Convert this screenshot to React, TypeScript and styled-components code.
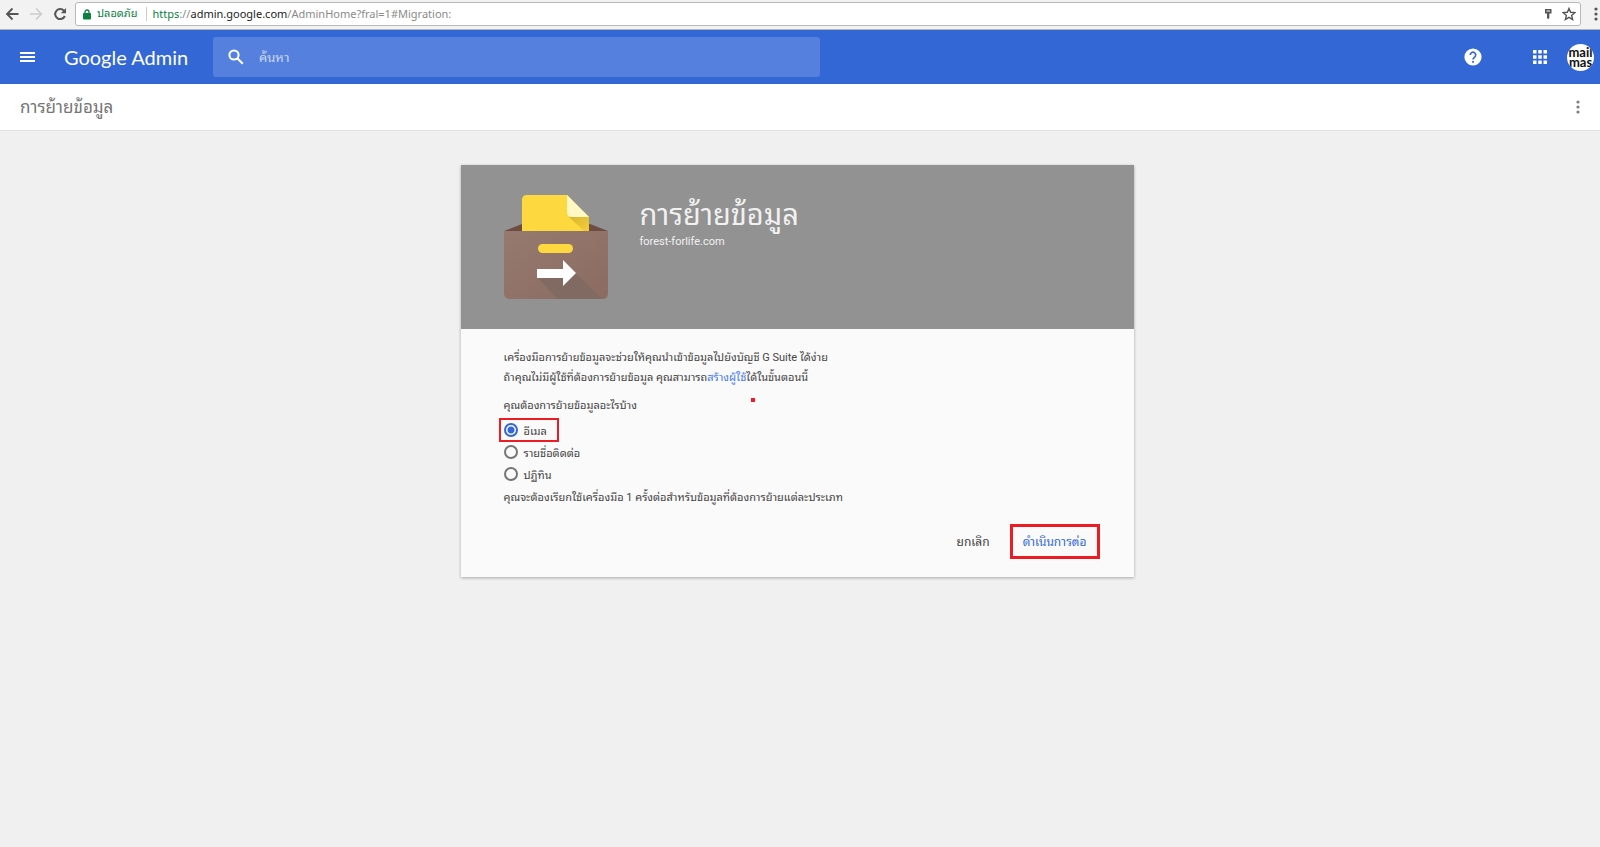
import React from "react";
import styled, { createGlobalStyle } from "styled-components";

const GlobalStyle = createGlobalStyle`
  * { box-sizing: border-box; }
  body {
    margin: 0;
    min-height: 100vh;
    background: #f0f0f0;
    color: #444;
    font-family: Roboto, "Noto Sans Thai Looped", "Noto Sans", sans-serif;
    font-size: 11px;
  }
  button, input { font: inherit; }
`;

const PlainButton = styled.button`
  display: grid;
  place-items: center;
  flex: none;
  padding: 0;
  border: 0;
  background: none;
  color: inherit;
  cursor: pointer;
`;

/* Browser bar */
const BrowserBar = styled.div`
  display: flex;
  align-items: center;
  height: 30px;
  padding: 0 0 1px 4px;
  border-bottom: 1px solid #b4b4b4;
  background: #f2f2f2;
  color: #555;
`;
const NavButton = styled(PlainButton)`
  width: 16px;
  height: 16px;
  margin-right: 8px;
  &:disabled { color: #ccc; cursor: default; }
`;
const AddressBox = styled.div`
  display: flex;
  align-items: center;
  flex: 1;
  height: 24px;
  margin-left: -1px;
  padding: 0 4px 0 7px;
  border: 1px solid #b8b8b8;
  border-radius: 3px;
  background: #fff;
  font-size: 12px;
`;
const Secure = styled.span`
  display: flex;
  align-items: center;
  gap: 6px;
  padding-right: 8px;
  margin-right: 6px;
  border-right: 1px solid #ccc;
  color: #0b8043;
  font-size: 11px;
  line-height: 14px;
`;
const Url = styled.span`
  flex: 1;
  color: #8a8a8a;
  font-family: "Noto Sans", sans-serif;
  font-size: 11px;
  line-height: 16px;
  white-space: nowrap;
  b { color: #222; font-weight: 400; }
  i { color: #0b8043; font-style: normal; }
`;
const BoxIcon = styled(PlainButton)`
  width: 14px;
  height: 14px;
  margin-left: 7px;
`;
const BrowserMenu = styled(PlainButton)`
  width: 14px;
  margin-left: 8px;
  margin-right: -3px;
`;

/* Application header */
const Header = styled.header`
  display: flex;
  align-items: center;
  height: 54px;
  padding: 0 6px 0 20px;
  background: #3367d6;
  color: #fff;
`;
const MenuButton = styled(PlainButton)`
  width: 15px;
  height: 24px;
`;
const Brand = styled.a`
  flex: none;
  width: 178px;
  padding-left: 29px;
  color: #fff;
  font-family: Lato, sans-serif;
  font-size: 20px;
  line-height: 24px;
  text-decoration: none;
  white-space: nowrap;
`;
const SearchBox = styled.label`
  display: flex;
  align-items: center;
  gap: 15px;
  flex: 0 1 607px;
  height: 40px;
  padding-left: 15px;
  border-radius: 3px;
  background: #5580dd;
`;
const SearchInput = styled.input`
  flex: 1;
  min-width: 0;
  border: 0;
  outline: 0;
  padding: 0;
  background: none;
  color: #fff;
  font-size: 13px;
  &::placeholder { color: #c9d7f5; opacity: 1; }
`;
const HeaderActions = styled.div`
  display: flex;
  align-items: center;
  margin-left: auto;
`;
const HelpButton = styled(PlainButton)`
  width: 18px;
  height: 18px;
  margin-right: 51px;
`;
const AppsButton = styled(PlainButton)`
  width: 14px;
  height: 14px;
  margin-right: 20px;
`;
const Avatar = styled(PlainButton)`
  display: block;
  width: 27px;
  height: 27px;
  border-radius: 50%;
  overflow: hidden;
  background: #fff;
  color: #111;
  font-family: Lato, sans-serif;
  font-size: 13px;
  font-weight: 700;
  line-height: 10px;
  text-align: center;
`;

const TitleBar = styled.div`
  display: flex;
  align-items: center;
  justify-content: space-between;
  height: 47px;
  padding: 0 20px;
  border-bottom: 1px solid #e0e0e0;
  background: #fff;
  color: #757575;
`;
const PageTitle = styled.h1`
  margin: 0;
  font-size: 17px;
  font-weight: 400;
  line-height: 24px;
`;
const MoreButton = styled(PlainButton)`
  width: 4px;
  height: 16px;
`;

/* Migration card */
const Main = styled.main`
  display: flex;
  justify-content: center;
  padding: 34px 6px 34px 0;
`;
const Card = styled.section`
  flex: 0 1 673px;
  background: #fafafa;
  box-shadow: 0 1px 3px rgba(0, 0, 0, 0.3);
`;
const CardHeader = styled.div`
  display: flex;
  gap: 32px;
  height: 164px;
  padding: 30px 43px;
  background: #929292;
  color: #f1f1f1;
`;
const CardTitle = styled.h2`
  margin: 0;
  font-size: 29px;
  font-weight: 400;
  line-height: 40px;
`;
const Domain = styled.p`
  margin: 0;
  font-size: 11px;
  line-height: 14px;
`;
const CardForm = styled.form`
  padding: 19px 34px 18px 43px;
`;
const Text = styled.p`
  margin: 0;
  line-height: 20px;
`;
const TextLink = styled.a`
  color: #4a7cf0;
  text-decoration: none;
`;
const Options = styled.fieldset`
  position: relative;
  display: flex;
  flex-direction: column;
  align-items: flex-start;
  margin: 8px 0 3px;
  padding: 0;
  border: 0;
`;
const Question = styled.legend`
  padding: 0 0 3px;
  line-height: 20px;
`;
const Option = styled.label<{ $marked?: boolean }>`
  display: flex;
  align-items: center;
  gap: 6px;
  height: 22px;
  margin-left: -4px;
  padding: 0 11px 0 4px;
  outline: ${(p) => (p.$marked ? "2px solid #ed1c24" : "none")};
  outline-offset: -1px;
`;
const Radio = styled.input`
  appearance: none;
  width: 14px;
  height: 14px;
  margin: 0;
  border: 2px solid #757575;
  border-radius: 50%;
  &:checked {
    border-color: #3367d6;
    background: radial-gradient(circle, #3367d6 3px, transparent 4px);
  }
`;
const Dot = styled.span`
  position: absolute;
  top: -21px;
  left: 247px;
  width: 4px;
  height: 4px;
  background: #ed1c24;
`;
const Actions = styled.div`
  display: flex;
  justify-content: flex-end;
  gap: 7px;
  margin-top: 16px;
`;
const Action = styled(PlainButton)<{ $primary?: boolean }>`
  height: 35px;
  padding: 0 13px;
  font-size: 12px;
  line-height: 20px;
  color: ${(p) => (p.$primary ? "#3367d6" : "#444")};
  outline: ${(p) => (p.$primary ? "3px solid #ed1c24" : "none")};
  outline-offset: -3px;
`;

const Dots = ({ color }: { color: string }) => (
  <svg width="4" height="16" viewBox="0 0 4 16" fill={color}>
    <circle cx="2" cy="3" r="1.6" />
    <circle cx="2" cy="8" r="1.6" />
    <circle cx="2" cy="13" r="1.6" />
  </svg>
);

const MigrationArt = () => (
  <svg width="104" height="104" viewBox="0 0 104 104" aria-hidden="true">
    <defs>
      <linearGradient id="box" x1="0" y1="0" x2="1" y2="1">
        <stop offset="0" stopColor="#967a6f" />
        <stop offset="1" stopColor="#8b6b61" />
      </linearGradient>
      <linearGradient id="fold" x1="0" y1="0" x2="1" y2="1">
        <stop offset="0" stopColor="#d9b52f" />
        <stop offset="1" stopColor="#f3cf3a" />
      </linearGradient>
    </defs>
    <path d="M0 36L18 29H86L104 36Z" fill="#6d4c41" />
    <path d="M23 0H63L85 22V37H18V5Q18 0 23 0Z" fill="#fdd93f" />
    <path d="M65 22H85V37H81Z" fill="url(#fold)" />
    <path d="M63 0L85 22H68Q63 22 63 17Z" fill="#fff7c4" />
    <path d="M0 36H104V98Q104 104 98 104H6Q0 104 0 98Z" fill="url(#box)" />
    <path d="M34 83L72 79L98 104H53Z" fill="#806a61" />
    <rect x="34" y="49" width="35" height="9" rx="4.5" fill="#fdd93f" />
    <path d="M33 74H59V65L72 78L59 91V83H33Z" fill="#fff" />
  </svg>
);

const options = ["อีเมล", "รายชื่อติดต่อ", "ปฏิทิน"];

export default function App() {
  return (
    <>
      <GlobalStyle />
      <BrowserBar>
        <NavButton aria-label="Back">
          <svg width="16" height="16" viewBox="0 0 16 16" fill="none" stroke="currentColor" strokeWidth="1.8">
            <path d="M14.500 8H3M8.500 2.500L3 8l5.500 5.500" />
          </svg>
        </NavButton>
        <NavButton aria-label="Forward" disabled>
          <svg width="16" height="16" viewBox="0 0 16 16" fill="none" stroke="currentColor" strokeWidth="1.600">
            <path d="M2 8h11.500M8 2.500L13.500 8L8 13.500" />
          </svg>
        </NavButton>
        <NavButton aria-label="Reload">
          <svg width="16" height="16" viewBox="0 0 16 16" fill="none" stroke="currentColor" strokeWidth="2">
            <path d="M12.800 10A5 5 0 1 1 12 4.800" />
            <path d="M14 2V7.200H8.800Z" fill="currentColor" stroke="none" />
          </svg>
        </NavButton>
        <AddressBox>
          <Secure>
            <svg width="8" height="11" viewBox="0 0 8 11">
              <rect y="4" width="8" height="6.500" rx="1" fill="#0b8043" />
              <path d="M2 4.500V3a2 2 0 0 1 4 0v1.500" fill="none" stroke="#0b8043" strokeWidth="1.300" />
            </svg>
            ปลอดภัย
          </Secure>
          <Url>
            <i>https</i>://<b>admin.google.com</b>/AdminHome?fral=1#Migration:
          </Url>
          <BoxIcon aria-label="Saved passwords">
            <svg width="14" height="14" viewBox="0 0 14 14">
              <path d="M4 2h6.500v4.500H8.300V11L7.300 12.200L6 11V6.500H4Z" fill="#555" />
              <path d="M5.500 4h3.500" stroke="#fff" />
            </svg>
          </BoxIcon>
          <BoxIcon aria-label="Bookmark">
            <svg width="14" height="14" viewBox="0 0 24 24" fill="none" stroke="#555" strokeWidth="2.400">
              <path d="M12 2.500l2.800 6.600 7.200.6-5.500 4.700 1.700 7L12 17.700l-6.200 3.700 1.700-7L2 9.700l7.200-.6z" />
            </svg>
          </BoxIcon>
        </AddressBox>
        <BrowserMenu aria-label="Browser menu"><Dots color="#555" /></BrowserMenu>
      </BrowserBar>

      <Header>
        <MenuButton aria-label="Menu">
          <svg width="15" height="10" viewBox="0 0 15 10" fill="#fff">
            <path d="M0 0h15v2H0zM0 4h15v2H0zM0 8h15v2H0z" />
          </svg>
        </MenuButton>
        <Brand href="#">Google Admin</Brand>
        <SearchBox>
          <svg width="16" height="16" viewBox="0 0 16 16" fill="none" stroke="#fff" strokeWidth="2">
            <circle cx="6" cy="6" r="4.600" />
            <path d="M9.500 9.500l5.300 5.300" />
          </svg>
          <SearchInput type="text" placeholder="ค้นหา" aria-label="ค้นหา" />
        </SearchBox>
        <HeaderActions>
          <HelpButton aria-label="Help">
            <svg width="18" height="18" viewBox="0 0 18 18">
              <circle cx="9" cy="9" r="8.600" fill="#fff" />
              <path d="M6.300 7a2.700 2.700 0 1 1 4.300 2.100C9.500 10 9 10.300 9 11.600" fill="none" stroke="#3367d6" strokeWidth="1.700" />
              <path d="M8.100 13h1.800v1.800H8.100z" fill="#3367d6" />
            </svg>
          </HelpButton>
          <AppsButton aria-label="Apps">
            <svg width="14" height="14" viewBox="0 0 14 14" fill="#fff">
              <path d="M0 0h3.500v3.500H0zM5.250 0h3.500v3.500h-3.500zM10.500 0H14v3.500h-3.500zM0 5.250h3.500v3.500H0zM5.250 5.250h3.500v3.500h-3.500zM10.500 5.250H14v3.500h-3.500zM0 10.500h3.500V14H0zM5.250 10.500h3.500V14h-3.500zM10.500 10.500H14V14h-3.500z" />
            </svg>
          </AppsButton>
          <Avatar aria-label="Account">mail mas</Avatar>
        </HeaderActions>
      </Header>

      <TitleBar>
        <PageTitle>การย้ายข้อมูล</PageTitle>
        <MoreButton aria-label="More"><Dots color="#808080" /></MoreButton>
      </TitleBar>

      <Main>
        <Card>
          <CardHeader>
            <MigrationArt />
            <div>
              <CardTitle>การย้ายข้อมูล</CardTitle>
              <Domain>forest-forlife.com</Domain>
            </div>
          </CardHeader>
          <CardForm onSubmit={(e) => e.preventDefault()}>
            <Text>เครื่องมือการย้ายข้อมูลจะช่วยให้คุณนำเข้าข้อมูลไปยังบัญชี G Suite ได้ง่าย</Text>
            <Text>
              ถ้าคุณไม่มีผู้ใช้ที่ต้องการย้ายข้อมูล คุณสามารถ<TextLink href="#">สร้างผู้ใช้</TextLink>ได้ในขั้นตอนนี้
            </Text>
            <Options>
              <Question>คุณต้องการย้ายข้อมูลอะไรบ้าง</Question>
              {options.map((name, i) => (
                <Option key={name} $marked={i === 0}>
                  <Radio type="radio" name="data" value={name} defaultChecked={i === 0} />
                  {name}
                </Option>
              ))}
              <Dot />
            </Options>
            <Text>คุณจะต้องเรียกใช้เครื่องมือ 1 ครั้งต่อสำหรับข้อมูลที่ต้องการย้ายแต่ละประเภท</Text>
            <Actions>
              <Action type="button">ยกเลิก</Action>
              <Action type="submit" $primary>ดำเนินการต่อ</Action>
            </Actions>
          </CardForm>
        </Card>
      </Main>
    </>
  );
}
